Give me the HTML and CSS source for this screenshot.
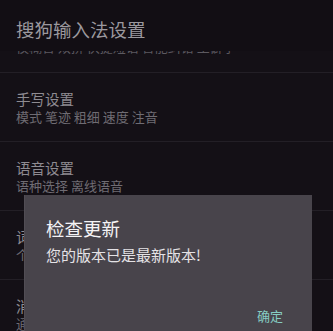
FILE: index.html
```html
<!DOCTYPE html>
<html lang="zh-CN">
<head>
<meta charset="utf-8">
<title>搜狗输入法设置</title>
<link rel="stylesheet" href="styles.css">
</head>
<body>
<div class="screen">
  <header class="appbar">
    <h1 class="appbar-title">搜狗输入法设置</h1>
  </header>
  <ul class="prefs">
    <li class="pref pref-partial">
      <div class="pref-title">输入设置</div>
      <div class="pref-summary">模糊音 双拼 快捷短语 智能纠错 生僻字</div>
    </li>
    <li class="pref">
      <div class="pref-title">手写设置</div>
      <div class="pref-summary">模式 笔迹 粗细 速度 注音</div>
    </li>
    <li class="pref">
      <div class="pref-title">语音设置</div>
      <div class="pref-summary">语种选择 离线语音</div>
    </li>
    <li class="pref">
      <div class="pref-title">词库设置</div>
      <div class="pref-summary">个人词库 细胞词库</div>
    </li>
    <li class="pref">
      <div class="pref-title">消息设置</div>
      <div class="pref-summary">通知 提醒</div>
    </li>
  </ul>
  <div class="dialog">
    <h2 class="dialog-title">检查更新</h2>
    <p class="dialog-message">您的版本已是最新版本!</p>
    <div class="dialog-actions">
      <button class="dialog-button">确定</button>
    </div>
  </div>
</div>
</body>
</html>
```

FILE: styles.css
```css
html, body {
  margin: 0;
  padding: 0;
  background: #141016;
}

body {
  font-family: "Noto Sans CJK SC", "Noto Sans", sans-serif;
}

.screen {
  position: relative;
  width: 333px;
  height: 331px;
  overflow: hidden;
  background: #141016;
}

.appbar {
  position: relative;
  z-index: 1;
  height: 51px;
  box-sizing: border-box;
  padding: 17px 16px 0;
  background: #120e14;
}

.appbar-title {
  margin: 0;
  font-size: 18.5px;
  line-height: 24px;
  font-weight: normal;
  color: #9b989e;
}

.prefs {
  list-style: none;
  margin: -51px 0 0;
  padding: 0;
}

.pref {
  padding: 17px 16px 15px;
  border-bottom: 1px solid #231f26;
}

.pref-partial {
  margin-top: -1px;
  padding-top: 20px;
  padding-bottom: 16px;
}

.pref-partial .pref-summary {
  color: #5c5960;
}

.pref-title {
  font-size: 14.5px;
  line-height: 18px;
  color: #8e8b91;
}

.pref-summary {
  font-size: 13px;
  line-height: 18px;
  color: #6f6c73;
  white-space: nowrap;
}

.dialog {
  position: absolute;
  left: 24px;
  top: 195px;
  width: 288px;
  height: 160px;
  box-sizing: border-box;
  padding: 21px 21px 0;
  background: #48444b;
  border-left: 1px solid #514d54;
}

.dialog-title {
  margin: 0;
  font-size: 18.5px;
  line-height: 24px;
  font-weight: normal;
  color: #f4f3f5;
}

.dialog-message {
  margin: 4px 0 0;
  font-size: 15px;
  line-height: 22px;
  color: #e4e2e6;
}

.dialog-actions {
  display: flex;
  justify-content: flex-end;
  margin-top: 41px;
}

.dialog-button {
  margin: 0;
  padding: 0 8px;
  border: none;
  background: transparent;
  font-family: "Noto Sans CJK SC", "Noto Sans", sans-serif;
  font-size: 13px;
  line-height: 17px;
  color: #86cdc3;
}
```
